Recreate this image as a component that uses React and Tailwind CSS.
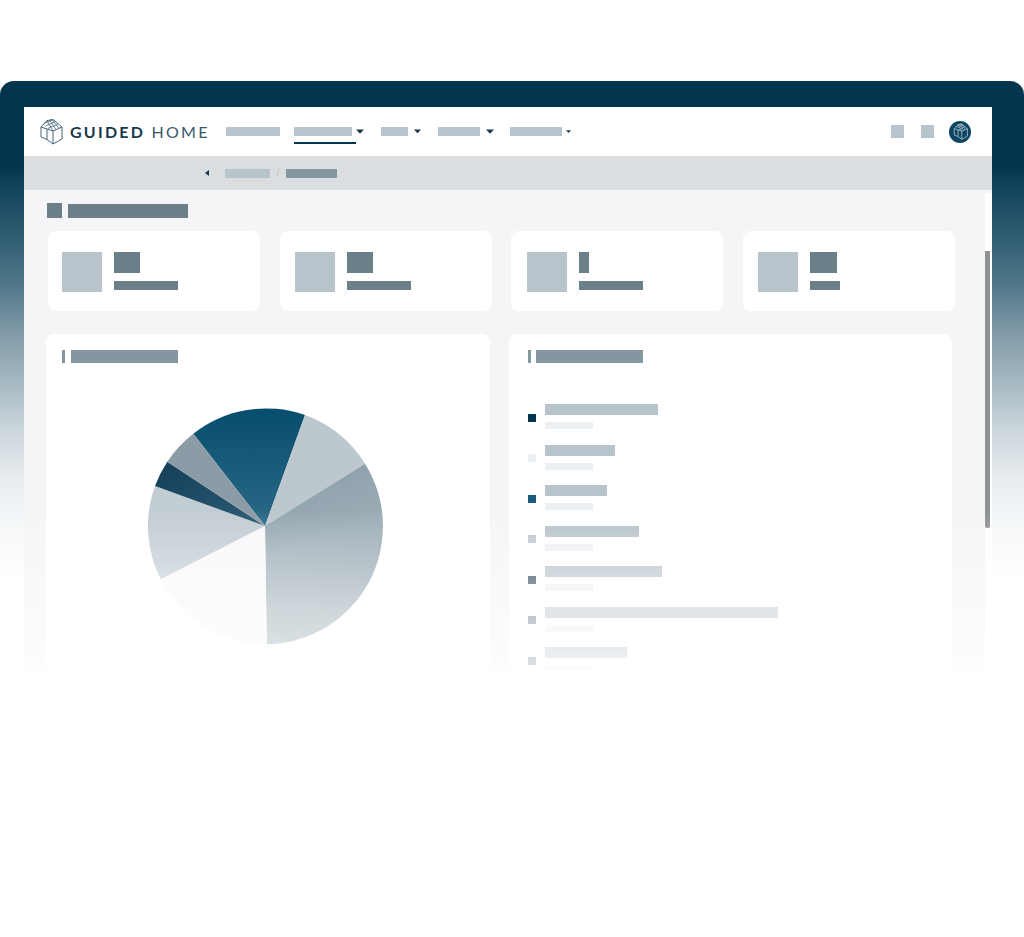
import React from "react";

const navItems = [
  { w: "w-[54px]", ml: "ml-0" },
  { w: "w-[58px]", ml: "ml-[14px]", active: true, caret: "w-[8px]", gap: "gap-[4px]" },
  { w: "w-[27px]", ml: "ml-[17px]", caret: "w-[7px]", gap: "gap-[6px]" },
  { w: "w-[42px]", ml: "ml-[17px]", caret: "w-[8px]", gap: "gap-[6px]" },
  { w: "w-[52px]", ml: "ml-[16px]", caret: "w-[5px]", gap: "gap-[4px]" },
];

const stats = [
  { pl: "pl-[14px]", value: "w-[26px]", label: "w-[64px]" },
  { pl: "pl-[15px]", value: "w-[26px]", label: "w-[64px]" },
  { pl: "pl-[16px]", value: "w-[10px]", label: "w-[64px]" },
  { pl: "pl-[15.5px]", value: "w-[27px]", label: "w-[30px]" },
];

const legend = [
  { dot: "bg-[#03354f]", bar: "w-[113px]" },
  { dot: "bg-[#eef1f3]", bar: "w-[70px]" },
  { dot: "bg-[#175b7d]", bar: "w-[62px]" },
  { dot: "bg-[#bec8d0]", bar: "w-[94px]" },
  { dot: "bg-[#30495f]", bar: "w-[117px]" },
  { dot: "bg-[#6b8290]", bar: "w-[233px]" },
  { dot: "bg-[#5c7080]", bar: "w-[82px]" },
];

const Caret = ({ className }) => (
  <svg viewBox="0 0 8 5" className={className}>
    <path d="M0 0.5h8L4 4.8z" fill="#17394d" />
  </svg>
);

const LogoMark = ({ className, stroke }) => (
  <svg viewBox="0 0 24 27" fill="none" stroke={stroke} strokeWidth="1" strokeLinejoin="round" className={className}>
    <path d="M2 9 8 2.500l6-1 9 7.500" />
    <path d="M2 9v10l6 2.500V11z" />
    <path d="M14 13l9-4v12l-9 5z" />
    <path d="M8 11l6 2M8 21.500l6 4.500" />
    <path d="M8 2.500 14 13M10.500 2 17 11.500M13 1.700 20 10.300M5 5.700 14 1.500M6.500 8l10-4.500M9 10.500 19 6" strokeWidth="0.8" />
  </svg>
);

const Pie = () => (
  <svg viewBox="-120 -120 240 240" className="w-[240px] h-[240px]">
    <defs>
      <linearGradient id="blue" x1="0" y1="0" x2="0" y2="1">
        <stop offset="0" stopColor="#074d6e" />
        <stop offset="1" stopColor="#2c6a87" />
      </linearGradient>
      <linearGradient id="big" x1="0.3" y1="0" x2="0.5" y2="1">
        <stop offset="0" stopColor="#8b9fa9" />
        <stop offset="0.45" stopColor="#9dadb6" />
        <stop offset="1" stopColor="#8ea1ab" />
      </linearGradient>
      <linearGradient id="dark" x1="0" y1="0" x2="1" y2="1">
        <stop offset="0" stopColor="#153f59" />
        <stop offset="1" stopColor="#2b5a74" />
      </linearGradient>
    </defs>
    <path d="M0 0L-71.700 -92.300A118 118 0 0 1 40 -111z" fill="url(#blue)" />
    <path d="M0 0L40 -111A118 118 0 0 1 100 -62.300z" fill="#bcc7ce" />
    <path d="M0 0L100 -62.300A118 118 0 0 1 1.700 118.300z" fill="url(#big)" />
    <path d="M0 0L1.700 118.300A118 118 0 0 1 -104.300 53.300z" fill="#f8f8fa" />
    <path d="M0 0L-104.300 53.300A118 118 0 0 1 -110 -40z" fill="#c2ccd3" />
    <path d="M0 0L-110 -40A118 118 0 0 1 -97.700 -64.300z" fill="url(#dark)" />
    <path d="M0 0L-97.700 -64.300A118 118 0 0 1 -71.700 -92.300z" fill="#8b9ca6" />
  </svg>
);

const PanelTitle = ({ gap }) => (
  <div className={`flex items-center ${gap}`}>
    <div className="w-[3px] h-[13px] bg-[#8497a1]" />
    <div className="w-[107px] h-[13px] bg-[#8497a1]" />
  </div>
);

export default function App() {
  return (
    <div className="w-[1024px] h-[937px] bg-white overflow-hidden pt-[81px]">
      <div className="h-[501px] rounded-[14px] pl-6 pr-8 pt-[26px] bg-[linear-gradient(180deg,#03354f_0px,#03354f_85px,#0f4059_99px,#2c5a70_149px,#4c7486_199px,#7f98a6_249px,#a4b7c1_299px,#ccd6dc_349px,#e8edf0_399px,#f7f9fa_449px,#ffffff_501px)]">
        <div className="relative h-[563px] overflow-hidden flex flex-col">
          <header className="h-[49px] shrink-0 bg-white flex items-center pl-[15px] pr-[21px]">
            <LogoMark className="w-[24px] h-[27px]" stroke="#47677a" />
            <div className="ml-[7px] w-[140px] whitespace-nowrap font-['Lato',sans-serif] text-[16px] leading-none tracking-[0.14em] text-[#17394d]">
              <span className="font-bold">GUIDED</span>{" "}
              <span className="text-[#3a586a]">HOME</span>
            </div>
            <nav className="ml-[16px] flex items-center">
              {navItems.map((item, i) => (
                <div key={i} className={`relative flex items-center ${item.gap} ${item.ml}`}>
                  <div className={`${item.w} h-[9px] bg-[#b8c4cb]`} />
                  {item.caret && <Caret className={`${item.caret} h-auto`} />}
                  {item.active && (
                    <div className="absolute left-0 top-[15px] w-[62px] h-[2px] bg-[#03354f]" />
                  )}
                </div>
              ))}
            </nav>
            <div className="ml-auto flex items-center">
              <div className="w-[13px] h-[13px] bg-[#b8c4cb]" />
              <div className="ml-[17px] w-[13px] h-[13px] bg-[#b8c4cb]" />
              <div className="ml-[15px] w-[22px] h-[22px] rounded-full bg-[#0b4562] flex items-center justify-center">
                <LogoMark className="w-[15px] h-[17px]" stroke="#dbe5ea" />
              </div>
            </div>
          </header>

          <div className="h-[34px] shrink-0 bg-[#dadee1] flex items-center pl-[181px]">
            <svg viewBox="0 0 4 6" className="w-[4px] h-[6px]">
              <path d="M4 0v6L0 3z" fill="#17394d" />
            </svg>
            <div className="ml-[16px] w-[45px] h-[9px] bg-[#b8c4cb]" />
            <span className="w-[16px] text-center font-['Liberation_Sans',sans-serif] text-[10px] leading-none text-[#bcc5ca]">/</span>
            <div className="w-[51px] h-[9px] bg-[#8497a1]" />
          </div>

          <main className="flex-1 flex bg-[#f5f5f7] min-h-0">
            <div className="w-[961px] shrink-0 pl-[24px]">
              <div className="flex items-center pt-[13px] -ml-[1px]">
                <div className="w-[15px] h-[15px] bg-[#6b7f89]" />
                <div className="ml-[6px] w-[120px] h-[14px] bg-[#6b7f89]" />
              </div>

              <div className="mt-[13px] flex gap-[19.5px]">
                {stats.map((s, i) => (
                  <div key={i} className={`w-[212px] h-[80px] rounded-lg bg-white flex items-center ${s.pl}`}>
                    <div className="w-[40px] h-[40px] mt-[2px] bg-[#b8c4cb]" />
                    <div className="ml-[12px] flex flex-col gap-[8px]">
                      <div className={`${s.value} h-[21px] bg-[#6b7f89]`} />
                      <div className={`${s.label} h-[9px] bg-[#6b7f89]`} />
                    </div>
                  </div>
                ))}
              </div>

              <div className="mt-[23px] -ml-[2px] flex gap-[19px]">
                <section className="w-[444px] h-[400px] rounded-lg bg-white pl-[16px] pt-[16px]">
                  <PanelTitle gap="gap-[6px]" />
                  <div className="mt-[43px] ml-[83px]">
                    <Pie />
                  </div>
                </section>
                <section className="w-[443px] h-[400px] rounded-lg bg-white pl-[19px] pt-[16px]">
                  <PanelTitle gap="gap-[5px]" />
                  <ul className="mt-[41px] flex flex-col gap-[15.5px]">
                    {legend.map((row, i) => (
                      <li key={i} className="flex items-center">
                        <div className={`w-[8px] h-[8px] mt-[2px] ${row.dot}`} />
                        <div className="ml-[9px] flex flex-col gap-[7px]">
                          <div className={`${row.bar} h-[11px] bg-[#b8c4cb]`} />
                          <div className="w-[48px] h-[7px] bg-[#edf0f3]" />
                        </div>
                      </li>
                    ))}
                  </ul>
                </section>
              </div>
            </div>
            <div className="flex-1 mt-[3px] bg-white pt-[58px]">
              <div className="w-[5px] h-[277px] rounded-b-[2px] bg-[#8e9194]" />
            </div>
          </main>

          {/* fade over the lower part of the screen */}
          <div className="absolute inset-x-0 bottom-0 h-[160px] bg-[linear-gradient(180deg,rgba(255,255,255,0)_0px,rgba(255,255,255,0.11)_20px,rgba(255,255,255,0.34)_60px,rgba(255,255,255,0.55)_100px,rgba(255,255,255,0.69)_140px,rgba(255,255,255,0.82)_160px)]" />
        </div>
      </div>
    </div>
  );
}
